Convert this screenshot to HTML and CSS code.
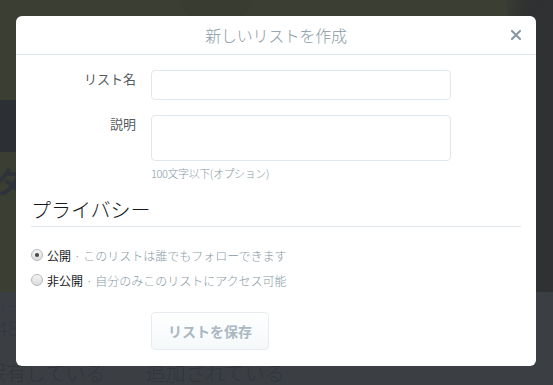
FILE: index.html
```html
<!DOCTYPE html>
<html lang="ja">
<head>
    <meta charset="UTF-8">
    <title>新しいリストを作成</title>
    <link rel="stylesheet" href="styles.css">
</head>
<body>
    <div class="page">
        <div class="banner">
            <div class="banner-left">
                <div class="banner-dark"></div>
                <span class="banner-glyph">タ</span>
            </div>
            <div class="banner-main"></div>
            <div class="banner-right"></div>
        </div>
        <div class="profile">
            <div class="stats">
                <span class="stat-label">イー</span>
                <span class="stat-num">48</span>
            </div>
            <div class="tabs">保有している　　追加されている</div>
        </div>
    </div>

    <div class="modal">
        <div class="modal-header">
            <h2 class="modal-title">新しいリストを作成</h2>
            <button class="close" aria-label="閉じる">
                <svg width="12" height="12" viewBox="0 0 12 12">
                    <path d="M2 2 L10 10 M10 2 L2 10" stroke="#8899a6" stroke-width="2.2" stroke-linecap="round"/>
                </svg>
            </button>
        </div>
        <div class="modal-body">
            <div class="form-row">
                <label class="form-label">リスト名</label>
                <input class="form-input" type="text">
            </div>
            <div class="form-row">
                <label class="form-label">説明</label>
                <div class="form-field">
                    <textarea class="form-textarea"></textarea>
                    <p class="form-help">100文字以下(オプション)</p>
                </div>
            </div>

            <h3 class="section-title">プライバシー</h3>

            <div class="radio-row first">
                <span class="radio checked"></span>
                <span class="radio-name">公開</span>
                <span class="radio-desc">· このリストは誰でもフォローできます</span>
            </div>
            <div class="radio-row">
                <span class="radio"></span>
                <span class="radio-name">非公開</span>
                <span class="radio-desc">· 自分のみこのリストにアクセス可能</span>
            </div>

            <button class="save-button">リストを保存</button>
        </div>
    </div>
</body>
</html>
```

FILE: styles.css
```css
body {
    margin: 0;
    padding: 0;
    width: 553px;
    height: 385px;
    overflow: hidden;
    font-family: "Noto Sans CJK JP", "Noto Sans", sans-serif;
    font-weight: 300;
    background-color: #3b3f44;
}

.page {
    display: flex;
    flex-direction: column;
    height: 385px;
}

.banner {
    display: flex;
    height: 292px;
    background: #3b3e32;
}

.banner-left {
    width: 16px;
    display: flex;
    flex-direction: column;
    overflow: hidden;
}

.banner-dark {
    margin-top: 100px;
    height: 52px;
    background: #2c3035;
}

.banner-glyph {
    margin-top: 10px;
    margin-left: -6px;
    font-size: 30px;
    font-weight: 700;
    color: #2e333a;
    line-height: 36px;
}

.banner-main {
    flex: 1;
    background: radial-gradient(ellipse 60px 40px at 200px 0, #393c30 0, #393c30 60%, #3b3e32 61%), #3b3e32;
}

.banner-right {
    width: 46px;
    background: linear-gradient(100deg, #393b33 0, #2e3032 25%, #2f3133 100%);
}

.profile {
    flex: 1;
    background: #3b3f44;
    display: flex;
    flex-direction: column;
}

.stats {
    display: flex;
    flex-direction: column;
    padding-top: 6px;
}

.stat-label {
    font-size: 12px;
    color: #34383d;
    line-height: 18px;
    margin-left: -4px;
}

.stat-num {
    font-size: 20px;
    color: #34383d;
    line-height: 24px;
    margin-left: -3px;
}

.tabs {
    margin-top: 21px;
    margin-left: -14px;
    font-size: 20px;
    color: #31353a;
    line-height: 24px;
    white-space: nowrap;
}

.modal {
    position: absolute;
    top: 16px;
    left: 16px;
    width: 520px;
    height: 350px;
    background: #fff;
    border-radius: 6px;
    overflow: hidden;
}

.modal-header {
    height: 38px;
    border-bottom: 1px solid #e1e8ed;
    display: flex;
    align-items: center;
    justify-content: center;
    position: relative;
}

.modal-title {
    margin: 0;
    font-size: 16px;
    font-weight: 300;
    color: #8899a6;
    letter-spacing: -0.3px;
}

.close {
    position: absolute;
    right: 14px;
    top: 13px;
    border: none;
    background: none;
    padding: 0;
    width: 12px;
    height: 12px;
    display: flex;
}

.modal-body {
    padding: 0 15px 16px;
}

.form-row {
    display: flex;
    gap: 15px;
    margin-top: 15px;
}

.form-label {
    width: 105px;
    text-align: right;
    font-size: 13px;
    line-height: 18px;
    font-weight: 400;
    color: #555b61;
}

.form-input,
.form-textarea {
    box-sizing: border-box;
    width: 300px;
    border: 1px solid #e1e8ed;
    border-radius: 4px;
    margin: 0;
    padding: 4px 8px;
    background: #fff;
}

.form-input {
    height: 30px;
}

.form-textarea {
    display: block;
    height: 46px;
    resize: none;
}

.form-help {
    margin: 5px 0 0;
    font-size: 11px;
    line-height: 14px;
    color: #8899a6;
    letter-spacing: -0.4px;
}

.section-title {
    margin: 17px 0 0;
    padding-bottom: 3px;
    border-bottom: 1px solid #e1e8ed;
    font-size: 20px;
    line-height: 26px;
    font-weight: 300;
    color: #14171a;
}

.radio-row {
    display: flex;
    align-items: center;
    height: 20px;
    margin-top: 5px;
    font-size: 12px;
    white-space: nowrap;
}

.radio-row.first {
    margin-top: 18px;
}

.radio {
    box-sizing: border-box;
    width: 12px;
    height: 12px;
    border-radius: 50%;
    border: 1px solid #b4b9be;
    background: linear-gradient(#f4f4f4, #dcdcdc);
    margin-right: 4px;
    display: flex;
    align-items: center;
    justify-content: center;
}

.radio.checked::after {
    content: "";
    width: 4px;
    height: 4px;
    border-radius: 50%;
    background: #444;
}

.radio-name {
    color: #14171a;
    font-weight: 400;
}

.radio-desc {
    color: #8899a6;
    margin-left: 3px;
}

.save-button {
    display: block;
    margin: 22px 0 0 120px;
    width: 118px;
    height: 38px;
    border: 1px solid #e6ecf0;
    border-radius: 4px;
    background: linear-gradient(#fff, #f5f8fa);
    font-family: inherit;
    font-size: 14px;
    font-weight: 700;
    color: #aab8c2;
}
```
